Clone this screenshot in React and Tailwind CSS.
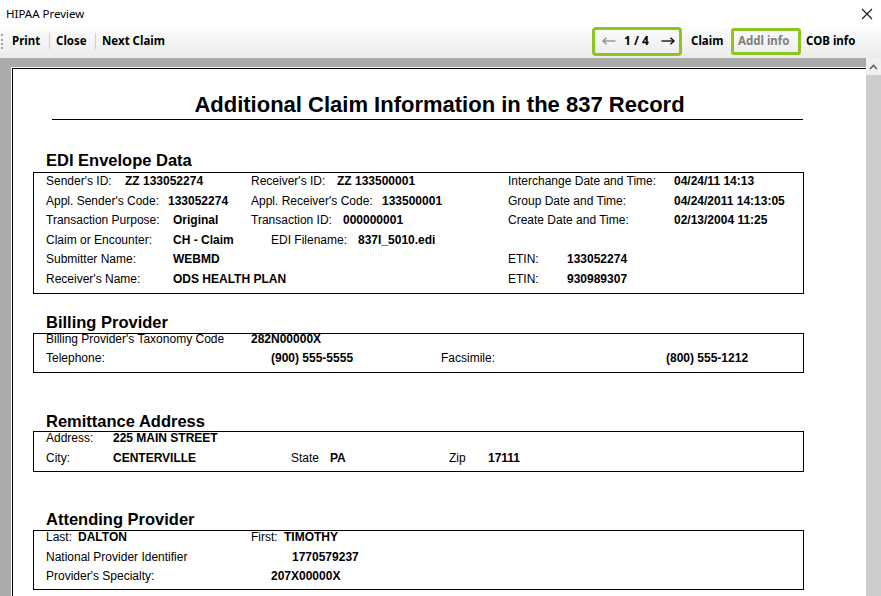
import React from "react";

const UI = { fontFamily: '"Noto Sans", "Open Sans", sans-serif' };
const DOC = { fontFamily: '"Liberation Sans", Arial, sans-serif' };

function ArrowLeft({ color }) {
  return (
    <svg width="14" height="8" viewBox="0 0 14 8" className="shrink-0">
      <path d="M1 4 H13.5" stroke={color} strokeWidth="1.3" fill="none" />
      <path d="M4.5 0.8 L1 4 L4.5 7.2" stroke={color} strokeWidth="1.3" fill="none" />
    </svg>
  );
}
function ArrowRight({ color }) {
  return (
    <svg width="14" height="8" viewBox="0 0 14 8" className="shrink-0">
      <path d="M0.5 4 H13" stroke={color} strokeWidth="1.3" fill="none" />
      <path d="M9.5 0.8 L13 4 L9.5 7.2" stroke={color} strokeWidth="1.3" fill="none" />
    </svg>
  );
}

export default function App() {
  return (
    <div className="w-[881px] h-[596px] overflow-hidden flex flex-col bg-white text-black">
      {/* Title bar */}
      <div className="h-[27px] shrink-0 flex items-center justify-between pl-[6px] pr-[8px]" style={UI}>
        <span className="text-[11.5px] leading-none">HIPAA Preview</span>
        <svg width="12" height="12" viewBox="0 0 12 12">
          <path d="M1 1 L11 11 M11 1 L1 11" stroke="#1a1a1a" strokeWidth="1.1" />
        </svg>
      </div>

      {/* Toolbar */}
      <div
        className="h-[31px] shrink-0 flex items-center pb-[3px] bg-gradient-to-b from-[#fdfdfd] to-[#ebebeb] text-[11.5px] font-bold"
        style={UI}
      >
        <div className="w-[592px] shrink-0 flex items-center">
          <div className="ml-[1px] w-[2px] h-[15px] border-l-2 border-dotted border-[#a0a0a0]" />
          <span className="ml-[9px] w-[37px] shrink-0">Print</span>
          <div className="w-[1px] h-[16px] bg-[#cfcfcf] shrink-0" />
          <span className="pl-[6px] w-[45px] shrink-0">Close</span>
          <div className="w-[1px] h-[16px] bg-[#cfcfcf] shrink-0" />
          <span className="pl-[6px]">Next Claim</span>
        </div>
        <div className="flex items-center">
          <div className="w-[90px] h-[29px] border-[3px] border-[#8dc41e] rounded-[4px] flex items-center pl-[7px]">
            <ArrowLeft color="#8a8a8a" />
            <span className="ml-[8px] w-[29px] shrink-0 text-[12px]">1 / 4</span>
            <span className="ml-[8px]">
              <ArrowRight color="#000" />
            </span>
          </div>
          <span className="ml-[9px] w-[31px] shrink-0">Claim</span>
          <div className="ml-[9px] w-[70px] h-[27px] border-[3px] border-[#8dc41e] rounded-[3px] flex items-center pl-[4px] text-[#808080]">
            Addl info
          </div>
          <span className="ml-[5px]">COB info</span>
        </div>
      </div>

      {/* Body */}
      <div className="flex-1 flex min-h-0">
        <div className="w-[866px] shrink-0 bg-[#ababab] overflow-hidden pt-[9px] pl-[11px]">
          <div className="w-[870px] h-[600px] bg-white pt-[1px] pl-[1px]">
            <div className="h-full border-l border-t border-black bg-white text-[12px] leading-[14px]" style={DOC}>
              {/* Title */}
              <div className="w-[853px] mt-[23px] h-[26px] leading-[26px] text-center text-[22px] font-bold">
                Additional Claim Information in the 837 Record
              </div>
              <div className="ml-[39px] mt-[1px] w-[751px] h-[1px] bg-black" />

              {/* EDI Envelope Data */}
              <div className="ml-[33px] mt-[31px] h-[19px] leading-[19px] text-[16.5px] font-bold">EDI Envelope Data</div>
              <div className="ml-[20px] mt-[2px] w-[771px] h-[122px] border border-black pl-[12px] pt-[1px]">
                <div className="flex h-[19.6px] whitespace-nowrap">
                  <span className="w-[79px] shrink-0">Sender's ID:</span>
                  <span className="w-[126px] shrink-0 font-bold">ZZ 133052274</span>
                  <span className="w-[86px] shrink-0">Receiver's ID:</span>
                  <span className="w-[171px] shrink-0 font-bold">ZZ 133500001</span>
                  <span className="w-[166px] shrink-0">Interchange Date and Time:</span>
                  <span className="font-bold">04/24/11 14:13</span>
                </div>
                <div className="flex h-[19.6px] whitespace-nowrap">
                  <span className="w-[122px] shrink-0">Appl. Sender's Code:</span>
                  <span className="w-[83px] shrink-0 font-bold">133052274</span>
                  <span className="w-[131px] shrink-0">Appl. Receiver's Code:</span>
                  <span className="w-[126px] shrink-0 font-bold">133500001</span>
                  <span className="w-[166px] shrink-0">Group Date and Time:</span>
                  <span className="font-bold">04/24/2011 14:13:05</span>
                </div>
                <div className="flex h-[19.6px] whitespace-nowrap">
                  <span className="w-[127px] shrink-0">Transaction Purpose:</span>
                  <span className="w-[78px] shrink-0 font-bold">Original</span>
                  <span className="w-[92px] shrink-0">Transaction ID:</span>
                  <span className="w-[165px] shrink-0 font-bold">000000001</span>
                  <span className="w-[166px] shrink-0">Create Date and Time:</span>
                  <span className="font-bold">02/13/2004 11:25</span>
                </div>
                <div className="flex h-[19.6px] whitespace-nowrap">
                  <span className="w-[127px] shrink-0">Claim or Encounter:</span>
                  <span className="w-[98px] shrink-0 font-bold">CH - Claim</span>
                  <span className="w-[87px] shrink-0">EDI Filename:</span>
                  <span className="font-bold">837I_5010.edi</span>
                </div>
                <div className="flex h-[19.6px] whitespace-nowrap">
                  <span className="w-[127px] shrink-0">Submitter Name:</span>
                  <span className="w-[335px] shrink-0 font-bold">WEBMD</span>
                  <span className="w-[59px] shrink-0">ETIN:</span>
                  <span className="font-bold">133052274</span>
                </div>
                <div className="flex h-[19.6px] whitespace-nowrap">
                  <span className="w-[127px] shrink-0">Receiver's Name:</span>
                  <span className="w-[335px] shrink-0 font-bold">ODS HEALTH PLAN</span>
                  <span className="w-[59px] shrink-0">ETIN:</span>
                  <span className="font-bold">930989307</span>
                </div>
              </div>

              {/* Billing Provider */}
              <div className="ml-[33px] mt-[19px] h-[19px] leading-[19px] text-[16.5px] font-bold">Billing Provider</div>
              <div className="ml-[20px] mt-[1px] w-[771px] h-[40px] border border-black pl-[12px]">
                <div className="flex h-[19px] -mt-[2px] whitespace-nowrap">
                  <span className="w-[205px] shrink-0">Billing Provider's Taxonomy Code</span>
                  <span className="font-bold">282N00000X</span>
                </div>
                <div className="flex h-[19px] whitespace-nowrap">
                  <span className="w-[225px] shrink-0">Telephone:</span>
                  <span className="w-[170px] shrink-0 font-bold">(900) 555-5555</span>
                  <span className="w-[225px] shrink-0">Facsimile:</span>
                  <span className="font-bold">(800) 555-1212</span>
                </div>
              </div>

              {/* Remittance Address */}
              <div className="ml-[33px] mt-[39px] h-[19px] leading-[19px] text-[16.5px] font-bold">Remittance Address</div>
              <div className="ml-[20px] w-[771px] h-[41px] border border-black pl-[12px]">
                <div className="flex h-[20px] -mt-[1px] whitespace-nowrap">
                  <span className="w-[67px] shrink-0">Address:</span>
                  <span className="font-bold">225 MAIN STREET</span>
                </div>
                <div className="flex h-[20px] whitespace-nowrap">
                  <span className="w-[67px] shrink-0">City:</span>
                  <span className="w-[178px] shrink-0 font-bold">CENTERVILLE</span>
                  <span className="w-[39px] shrink-0">State</span>
                  <span className="w-[119px] shrink-0 font-bold">PA</span>
                  <span className="w-[39px] shrink-0">Zip</span>
                  <span className="font-bold">17111</span>
                </div>
              </div>

              {/* Attending Provider */}
              <div className="ml-[33px] mt-[38px] h-[19px] leading-[19px] text-[16.5px] font-bold">Attending Provider</div>
              <div className="ml-[20px] mt-[1px] w-[771px] h-[60px] border border-black pl-[12px]">
                <div className="flex h-[20px] -mt-[1px] whitespace-nowrap">
                  <span className="w-[32px] shrink-0">Last:</span>
                  <span className="w-[173px] shrink-0 font-bold">DALTON</span>
                  <span className="w-[33px] shrink-0">First:</span>
                  <span className="font-bold">TIMOTHY</span>
                </div>
                <div className="flex h-[19.3px] whitespace-nowrap">
                  <span className="w-[246px] shrink-0">National Provider Identifier</span>
                  <span className="font-bold">1770579237</span>
                </div>
                <div className="flex h-[19.3px] whitespace-nowrap">
                  <span className="w-[225px] shrink-0">Provider's Specialty:</span>
                  <span className="font-bold">207X00000X</span>
                </div>
              </div>
            </div>
          </div>
        </div>

        {/* Scrollbar */}
        <div className="w-[15px] shrink-0 flex flex-col bg-[#cdcdcd]">
          <div className="h-[17px] bg-[#f0f0f0] flex items-center justify-center">
            <svg width="9" height="6" viewBox="0 0 9 6">
              <path d="M1 5 L4.5 1.5 L8 5" stroke="#606060" strokeWidth="1.6" fill="none" />
            </svg>
          </div>
          <div className="flex-1 bg-[#cdcdcd]" />
        </div>
      </div>
    </div>
  );
}
